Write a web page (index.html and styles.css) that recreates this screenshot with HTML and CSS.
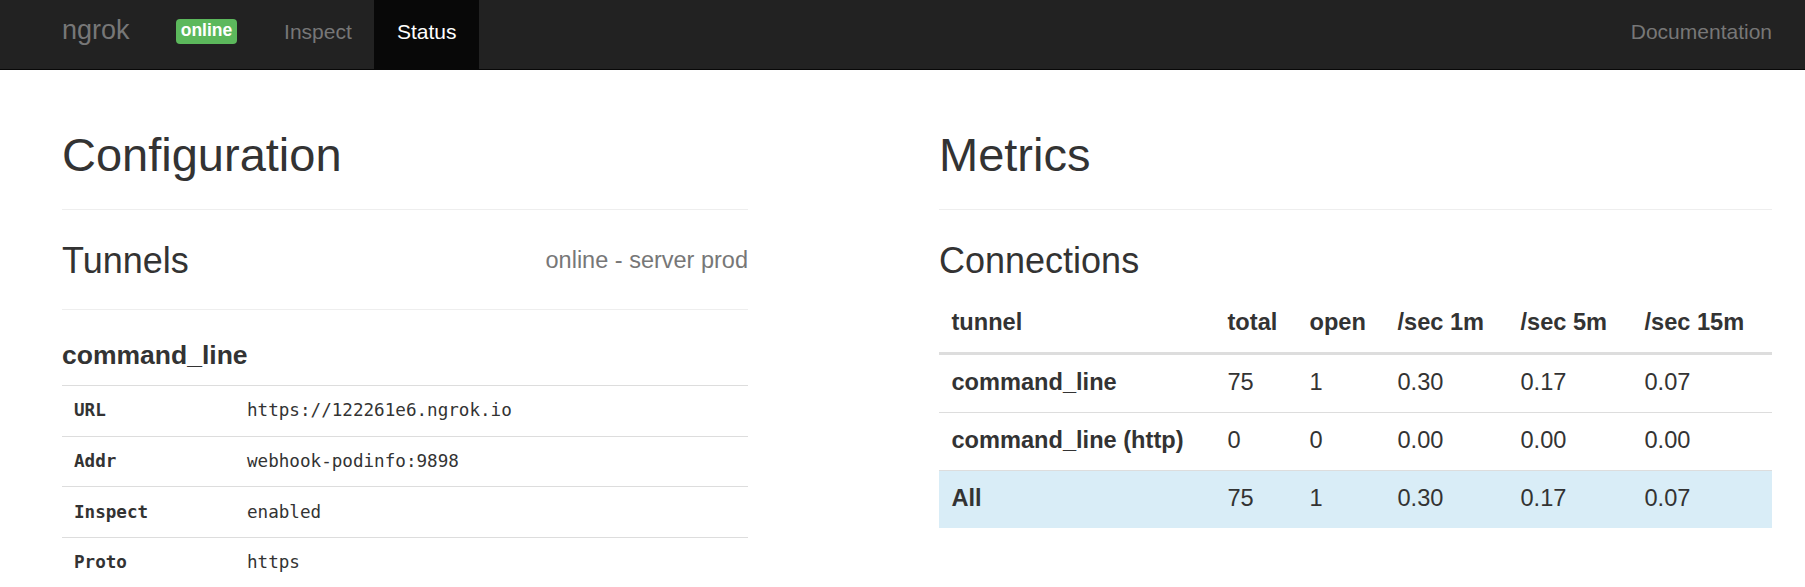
FILE: index.html
```html
<!DOCTYPE html>
<html lang="en">
<head>
<meta charset="utf-8">
<title>ngrok - Status</title>
<link rel="stylesheet" href="styles.css">
</head>
<body>
<nav class="navbar">
  <a class="brand" href="#">ngrok</a>
  <span class="badge">online</span>
  <a class="nav-link" href="#">Inspect</a>
  <a class="nav-link active" href="#">Status</a>
  <a class="nav-link nav-right" href="#">Documentation</a>
</nav>

<main class="content">
  <section class="col">
    <h1 class="page-title">Configuration</h1>
    <hr class="rule">
    <div class="section-head">
      <h2 class="section-title">Tunnels</h2>
      <span class="section-meta">online - server prod</span>
    </div>
    <hr class="rule rule-tight">
    <h4 class="tunnel-name">command_line</h4>
    <table class="kv-table">
      <tbody>
        <tr><th>URL</th><td>https://122261e6.ngrok.io</td></tr>
        <tr><th>Addr</th><td>webhook-podinfo:9898</td></tr>
        <tr><th>Inspect</th><td>enabled</td></tr>
        <tr><th>Proto</th><td>https</td></tr>
      </tbody>
    </table>
  </section>

  <section class="col">
    <h1 class="page-title">Metrics</h1>
    <hr class="rule">
    <h2 class="section-title">Connections</h2>
    <table class="metrics-table">
      <colgroup>
        <col class="c-tunnel"><col class="c-total"><col class="c-open"><col class="c-1m"><col class="c-5m"><col class="c-15m">
      </colgroup>
      <thead>
        <tr><th>tunnel</th><th>total</th><th>open</th><th>/sec 1m</th><th>/sec 5m</th><th>/sec 15m</th></tr>
      </thead>
      <tbody>
        <tr><th>command_line</th><td>75</td><td>1</td><td>0.30</td><td>0.17</td><td>0.07</td></tr>
        <tr><th>command_line (http)</th><td>0</td><td>0</td><td>0.00</td><td>0.00</td><td>0.00</td></tr>
        <tr class="row-info"><th>All</th><td>75</td><td>1</td><td>0.30</td><td>0.17</td><td>0.07</td></tr>
      </tbody>
    </table>
  </section>
</main>
</body>
</html>
```

FILE: styles.css
```css
html {
  overflow: hidden;
}

body {
  margin: 0;
  background: #fff;
  color: #333;
  font-family: "Liberation Sans", Arial, Helvetica, sans-serif;
}

a {
  text-decoration: none;
}

/* ---------- navbar ---------- */
.navbar {
  display: flex;
  align-items: flex-start;
  height: 69px;
  padding: 0 33px 0 62px;
  background: #222;
  border-bottom: 1px solid #080808;
}

.brand {
  color: #777;
  font-size: 27px;
  line-height: 28px;
  padding-top: 16px;
  margin-right: 46px;
}

.badge {
  margin-top: 19px;
  margin-right: 24px;
  padding: 2.6px 5.2px 4.9px;
  background: #5cb85c;
  color: #fff;
  font-weight: bold;
  font-size: 17.5px;
  line-height: 17.5px;
  border-radius: 4px;
}

.nav-link {
  box-sizing: border-box;
  height: 69px;
  padding: 17.5px 22.6px 0;
  color: #777;
  font-size: 21px;
  line-height: 28px;
}

.nav-link.active {
  background: #080808;
  color: #fff;
}

.nav-right {
  margin-left: auto;
  margin-right: -22.6px;
}

/* ---------- content ---------- */
.content {
  display: grid;
  grid-template-columns: 686px 833px;
  column-gap: 191px;
  padding: 0 33px 0 62px;
}

.col {
  min-width: 0;
}

.page-title {
  margin: 58.6px 0 0;
  font-size: 47px;
  line-height: 1.1;
  font-weight: normal;
}

.rule {
  margin: 28.7px 0 0;
  border: 0;
  border-top: 1px solid #eee;
  height: 0;
}

.rule-tight {
  margin-top: 28.4px;
}

.section-head {
  display: flex;
  align-items: center;
  justify-content: space-between;
}

.section-title {
  margin: 31px 0 0;
  font-size: 36px;
  line-height: 1.1;
  font-weight: normal;
}

.section-meta {
  margin-top: 31px;
  color: #777;
  font-size: 23.5px;
  line-height: 1.1;
}

.tunnel-name {
  margin: 31.2px 0 0;
  font-size: 26.5px;
  line-height: 1.1;
  font-weight: bold;
}

/* ---------- key/value table ---------- */
.kv-table {
  width: 100%;
  margin-top: 14.6px;
  border-collapse: collapse;
  font-family: "DejaVu Sans Mono", "Liberation Mono", monospace;
  font-size: 17.6px;
  line-height: 26.7px;
}

.kv-table th,
.kv-table td {
  padding: 11.5px 12px;
  border-top: 1px solid #ddd;
  text-align: left;
  vertical-align: top;
}

.kv-table th {
  width: 149px;
  font-weight: bold;
}

.kv-table td {
  font-weight: normal;
}

/* ---------- metrics table ---------- */
.metrics-table {
  width: 100%;
  margin-top: 14.4px;
  border-collapse: collapse;
  table-layout: fixed;
  font-size: 23.6px;
  line-height: 33.9px;
}

.c-tunnel { width: 276px; }
.c-total { width: 82px; }
.c-open { width: 88px; }
.c-1m { width: 123px; }
.c-5m { width: 124px; }
.c-15m { width: 140px; }

.metrics-table th,
.metrics-table td {
  padding: 11.5px 12.5px;
  text-align: left;
  white-space: nowrap;
}

.metrics-table thead th {
  border-bottom: 3px solid #ddd;
  font-weight: bold;
}

.metrics-table tbody th,
.metrics-table tbody td {
  border-top: 1px solid #ddd;
}

.metrics-table tbody tr:first-child th,
.metrics-table tbody tr:first-child td {
  border-top: 0;
}

.metrics-table tbody th {
  font-weight: bold;
}

.metrics-table td {
  font-weight: normal;
}

.row-info th,
.row-info td {
  background: #d9edf7;
}
```
